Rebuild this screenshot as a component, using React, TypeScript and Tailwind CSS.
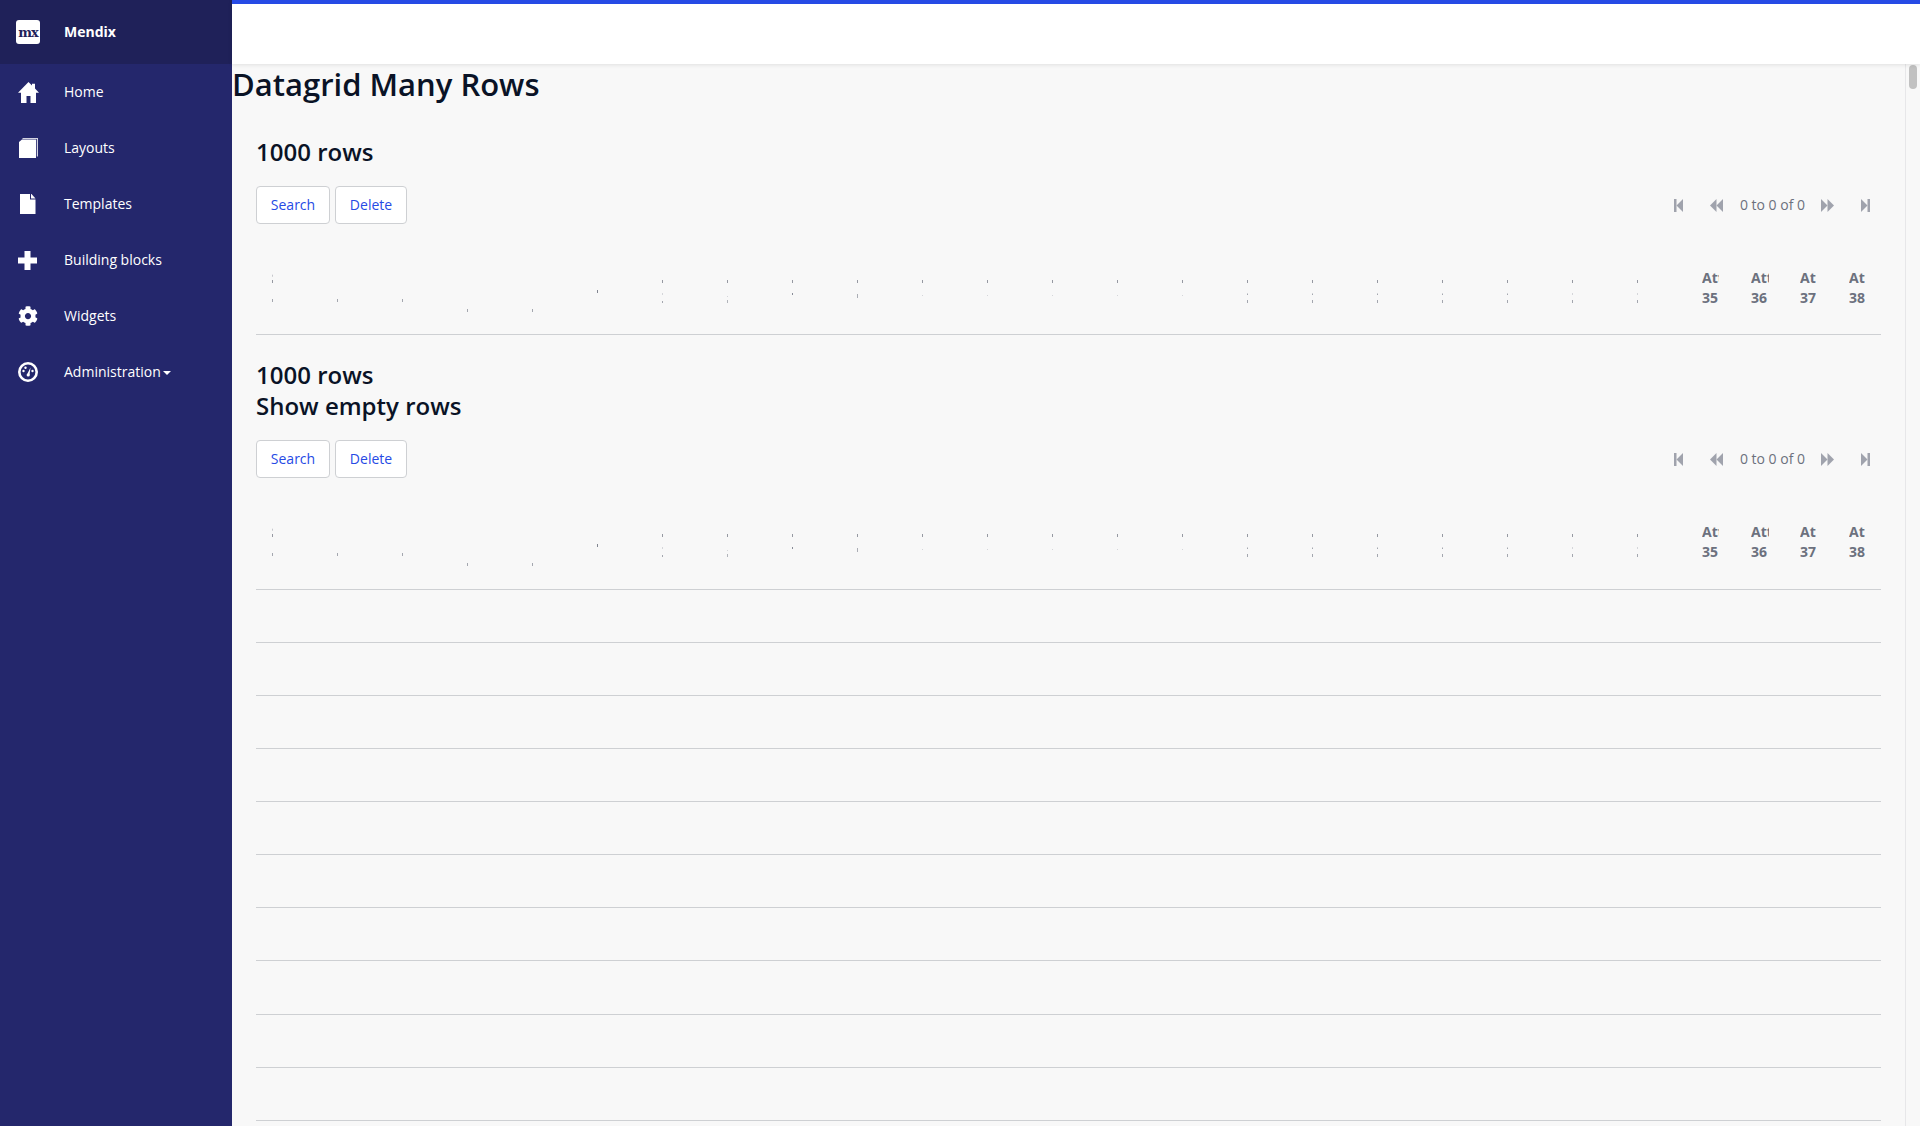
import React from 'react';
import { FaCog } from 'react-icons/fa';

const FONT = { fontFamily: '"Open Sans", sans-serif' };

const HomeIcon = () => (
  <svg width="21" height="21" viewBox="0 0 21 21" fill="#fff">
    <path d="M10.5 0 14 3.4V1.8h3v4.6l4 4.4h-3V21h-5.500v-7h-4v7H3V10.800H0Z" />
  </svg>
);

const BookIcon = () => (
  <svg className="ml-px" width="19" height="20" viewBox="0 0 19 20" fill="#fff">
    <path d="M3 1.500h14V20H0V4Z" />
    <path d="M3.500 0H19v18.500h-1.200V1H3.500Z" opacity="0.8" />
  </svg>
);

const FileIcon = () => (
  <svg className="ml-[1.500px]" width="16" height="20" viewBox="0 0 16 20" fill="#fff">
    <path d="M0 0h10v5.500h5.500V20H0Z" />
    <path d="M11 0h.5l4 4.500H11Z" />
  </svg>
);

const PlusIcon = () => (
  <svg width="19" height="19" viewBox="0 0 19 19" fill="#fff">
    <path d="M6.500 0h6v6.500H19v6h-6.500V19h-6v-6.500H0v-6h6.500Z" />
  </svg>
);

const GaugeIcon = () => (
  <svg width="20" height="20" viewBox="0 0 20 20">
    <circle cx="10" cy="10" r="8.700" fill="none" stroke="#fff" strokeWidth="2.600" />
    <circle cx="5.500" cy="9" r="1.200" fill="#fff" />
    <circle cx="7.500" cy="5.800" r="1.200" fill="#fff" />
    <circle cx="14.500" cy="9" r="1.200" fill="#fff" />
    <path d="M9 12.500 12.500 5.500 11.500 13Z" fill="#fff" />
    <circle cx="10.200" cy="13" r="1.600" fill="#fff" />
  </svg>
);

const NAV_ITEMS = [
  { label: 'Home', icon: <HomeIcon /> },
  { label: 'Layouts', icon: <BookIcon /> },
  { label: 'Templates', icon: <FileIcon /> },
  { label: 'Building blocks', icon: <PlusIcon /> },
  { label: 'Widgets', icon: <FaCog size={20} color="#fff" /> },
  { label: 'Administration', icon: <GaugeIcon />, caret: true },
];

const Sidebar = () => (
  <aside className="flex w-[232px] shrink-0 flex-col bg-[#24276c] text-sm text-white">
    <div className="flex h-16 items-center bg-[#1f2159] pl-4">
      <div className="flex h-6 w-6 items-center justify-center overflow-hidden rounded-[3px] bg-white">
        <span className="text-[13px] leading-none font-bold tracking-[-1px] text-[#1f2159]" style={{ fontFamily: '"DejaVu Serif", serif' }}>
          mx
        </span>
      </div>
      <span className="ml-6 font-bold">Mendix</span>
    </div>
    {NAV_ITEMS.map((item) => (
      <div key={item.label} className="flex h-14 items-center pl-[18px]">
        <div className="w-[46px]">{item.icon}</div>
        <span>{item.label}</span>
        {item.caret && (
          <svg className="ml-[2px] mt-px" width="8" height="4" viewBox="0 0 8 4" fill="#fff">
            <path d="M0 0h8L4 4Z" />
          </svg>
        )}
      </div>
    ))}
  </aside>
);

const PAGER_COLOR = '#a0a3ad';

const Pager = () => (
  <div className="flex items-center pr-[11px] text-sm text-[#6c717e]">
    <svg width="9" height="13" viewBox="0 0 9 13" fill={PAGER_COLOR}>
      <path d="M0 0h2.500v13H0Z" />
      <path d="M9 0v13L2.500 6.500Z" />
    </svg>
    <svg className="ml-[27px]" width="13" height="13" viewBox="0 0 13 13" fill={PAGER_COLOR}>
      <path d="M6.500 0v13L0 6.500Z" />
      <path d="M13 0v13L6.500 6.500Z" />
    </svg>
    <span className="ml-[17px] mr-4">0 to 0 of 0</span>
    <svg width="13" height="13" viewBox="0 0 13 13" fill={PAGER_COLOR}>
      <path d="M0 0v13l6.500-6.500Z" />
      <path d="M6.500 0v13L13 6.500Z" />
    </svg>
    <svg className="ml-[27px]" width="9" height="13" viewBox="0 0 9 13" fill={PAGER_COLOR}>
      <path d="M0 0v13l6.500-6.500Z" />
      <path d="M6.500 0H9v13H6.500Z" />
    </svg>
  </div>
);

const Toolbar = () => (
  <div className="flex h-[38px] items-center justify-between">
    <div className="flex gap-[5px] text-sm text-[#264ae5]">
      <button className="h-[38px] w-[74px] rounded border border-[#ced0d3] bg-white">Search</button>
      <button className="h-[38px] w-[72px] rounded border border-[#ced0d3] bg-white">Delete</button>
    </div>
    <Pager />
  </div>
);

// Header texts are squeezed to 1px wide in the source grid, so only slivers of glyphs are left: [y, height, opacity]
type Tick = [number, number, number];
const A: Tick = [56, 3, 0.7];
const MID: Tick[] = [A, [69.5, 1.5, 0.6], [76, 3, 0.6]];
const FAINT: Tick[] = [A, [69, 2, 0.25], [76, 3, 0.6]];
const DOT: Tick[] = [A, [71, 1, 0.25]];

const TICKS: Tick[][] = [
  [[50.7, 2, 0.35], A, [75, 3, 0.6]],
  [[75, 3, 0.6]],
  [[75, 3, 0.6]],
  [[85, 3, 0.6]],
  [[85, 3, 0.6]],
  [[66, 3, 0.85]],
  [A, [69, 2, 0.25], [77, 2, 0.6]],
  [A, [72, 1, 0.25], [76, 3, 0.5]],
  [A, [69, 2, 0.8]],
  [A, [70, 4, 0.55]],
  DOT,
  DOT,
  DOT,
  DOT,
  DOT,
  MID,
  MID,
  MID,
  MID,
  MID,
  FAINT,
  FAINT,
];

const LAST_COLUMNS = [
  { label: 'Attribute 35', clip: 'w-[17px]' },
  { label: 'Attribute 36', clip: 'w-[17.5px]' },
  { label: 'Attribute 37', clip: 'w-[16px]' },
  { label: 'Attribute 38', clip: 'w-[16px]' },
];

const GridHeader = ({ height }: { height: string }) => (
  <div className={`grid ${height} grid-cols-[repeat(22,65px)_repeat(4,49px)] border-b border-[#ced0d3]`}>
    {TICKS.map((ticks, i) => (
      <div key={i} className="pl-4">
        <svg className="block" width="1" height="110" fill="#6c717e">
          {ticks.map(([y, h, o]) => (
            <rect key={y} x="0" y={y} width="1" height={h} opacity={o} />
          ))}
        </svg>
      </div>
    ))}
    {LAST_COLUMNS.map((col) => (
      <div key={col.label} className="pl-4 pt-[44px]">
        <div className={`${col.clip} overflow-hidden text-sm leading-5 font-bold text-[#6c717e]`}>{col.label}</div>
      </div>
    ))}
  </div>
);

const App = () => (
  <div className="flex h-screen overflow-hidden bg-[#f8f8f8]" style={FONT}>
    <Sidebar />
    <div className="flex min-w-0 flex-1 flex-col">
      <div className="relative z-10 h-16 shrink-0 border-t-4 border-[#264ae5] bg-white shadow-[0_1px_4px_rgba(0,0,0,0.1)]" />
      <div className="flex min-h-0 flex-1">
        <main className="min-w-0 flex-1 overflow-hidden text-[#0a1326]">
          <h1 className="text-[31px] leading-10 font-semibold">Datagrid Many Rows</h1>
          <section className="px-6 pt-8">
            <h2 className="mb-[19px] text-2xl leading-[31px] font-semibold">1000 rows</h2>
            <Toolbar />
            <GridHeader height="h-[111px]" />
          </section>
          <section className="px-6 pt-[24px]">
            <h2 className="mb-[19px] text-2xl leading-[31px] font-semibold">
              1000 rows
              <br />
              Show empty rows
            </h2>
            <Toolbar />
            <GridHeader height="h-[112px]" />
            {Array.from({ length: 10 }, (_, i) => (
              <div key={i} className="h-[53.07px] border-b border-[#ced0d3]" />
            ))}
          </section>
        </main>
        <div className="w-[15px] shrink-0 border-l border-[#e7e7e9] pl-[3px] pt-px">
          <div className="h-6 w-2 rounded bg-[#c1c1c1]" />
        </div>
      </div>
    </div>
  </div>
);

export default App;
